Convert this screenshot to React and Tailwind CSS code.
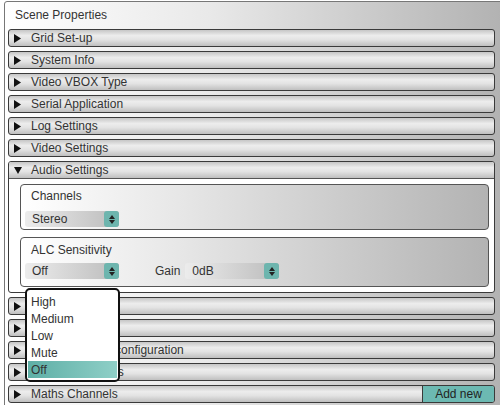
import React from "react";

const rowBg =
  "bg-[linear-gradient(to_bottom,#c6c6c6_0%,#ededed_35%,#e3e3e3_60%,#bfbfbf_100%)]";

function Tri({ down }) {
  return (
    <svg width="8" height="9" viewBox="0 0 8 9" className="shrink-0">
      {down ? (
        <polygon points="0,1 8,1 4,8" fill="#111" />
      ) : (
        <polygon points="0,0 7,4.5 0,9" fill="#111" />
      )}
    </svg>
  );
}

function Row({ label, children }) {
  return (
    <div
      className={`h-[18px] flex items-center border border-[#3a3a3a] rounded-[3px] ${rowBg} pl-[5px] text-[12px] text-[#333] relative overflow-hidden`}
    >
      <Tri />
      <span className="ml-[9px] leading-none">{label}</span>
      {children}
    </div>
  );
}

function Spinner() {
  return (
    <div className="w-[15px] h-[16px] rounded-[3px] bg-[#6db5ae] flex flex-col items-center justify-center gap-[1px]">
      <svg width="6" height="4" viewBox="0 0 6 4">
        <polygon points="0,4 6,4 3,0" fill="#222" />
      </svg>
      <svg width="6" height="4" viewBox="0 0 6 4">
        <polygon points="0,0 6,0 3,4" fill="#222" />
      </svg>
    </div>
  );
}

function Select({ value, width }) {
  return (
    <div
      className="h-[16px] flex items-center justify-between rounded-[3px] bg-[linear-gradient(to_right,#ececec,#bcbcbc)] pl-[7px] text-[12px] text-[#333]"
      style={{ width }}
    >
      <span className="leading-none">{value}</span>
      <Spinner />
    </div>
  );
}

const boxBg = "bg-[linear-gradient(to_right,#ffffff_0%,#e6e6e6_35%,#b3b3b3_100%)]";

export default function App() {
  return (
    <div
      className="w-[500px] h-[405px] overflow-hidden bg-white relative"
      style={{ fontFamily: '"Liberation Sans", Arial, sans-serif' }}
    >
      <div className="ml-[4px] mt-[1px] w-[510px] h-[420px] border border-[#777] rounded-[3px] bg-[linear-gradient(to_right,#ffffff_0%,#e9e9e9_40%,#b0b0b0_100%)]">
        <div className="h-[27px] pt-[7px] pl-[10px] text-[12px] leading-none text-[#333]">
          Scene Properties
        </div>
        <div className="w-[487px] ml-[3px] flex flex-col gap-[4px]">
          <Row label="Grid Set-up" />
          <Row label="System Info" />
          <Row label="Video VBOX Type" />
          <Row label="Serial Application" />
          <Row label="Log Settings" />
          <Row label="Video Settings" />
          <div className="border border-[#3a3a3a] rounded-[3px] overflow-hidden bg-white">
            <div
              className={`h-[17px] flex items-center ${rowBg} pl-[5px] text-[12px] text-[#333] border-b border-[#555]`}
            >
              <Tri down />
              <span className="ml-[9px] leading-none">Audio Settings</span>
            </div>
            <div className="pl-[11px] pr-[5px] pt-[5px] pb-[5px] flex flex-col gap-[7px]">
              <div
                className={`h-[46px] border border-[#555] rounded-[4px] ${boxBg} pl-[4px] pt-[5px] flex flex-col`}
              >
                <div className="text-[12px] text-[#333] leading-none pl-[6px] h-[21px]">
                  Channels
                </div>
                <Select value="Stereo" width={94} />
              </div>
              <div
                className={`h-[50px] border border-[#555] rounded-[4px] ${boxBg} pl-[4px] pt-[6px] flex flex-col`}
              >
                <div className="text-[12px] text-[#333] leading-none pl-[6px] h-[19px]">
                  ALC Sensitivity
                </div>
                <div className="flex items-center">
                  <Select value="Off" width={94} />
                  <span className="ml-[36px] text-[12px] text-[#333] leading-none">
                    Gain
                  </span>
                  <div className="ml-[5px]">
                    <Select value="0dB" width={94} />
                  </div>
                </div>
              </div>
            </div>
          </div>
          <Row label="Lap Timing" />
          <Row label="CAN Settings" />
          <Row label="Analogue Input configuration" />
          <Row label="Vehicle Channels" />
          <Row label="Maths Channels">
            <div className="absolute right-0 top-0 bottom-0 w-[72px] bg-[#6cb9b2] border-l border-[#3a3a3a] flex items-center justify-center text-[12px] text-[#222]">
              Add new
            </div>
          </Row>
        </div>
      </div>

      <div className="absolute left-[25px] top-[288px] w-[95px] h-[94px] bg-white border-2 border-[#111] rounded-[5px] flex flex-col pt-[3px] px-[1px] text-[12px] text-[#333]">
        <div className="h-[17px] flex items-center pl-[3px]">High</div>
        <div className="h-[17px] flex items-center pl-[3px]">Medium</div>
        <div className="h-[17px] flex items-center pl-[3px]">Low</div>
        <div className="h-[17px] flex items-center pl-[3px]">Mute</div>
        <div className="h-[17px] flex items-center pl-[3px] bg-[linear-gradient(to_right,#5eafa6,#8fcfc7)]">
          Off
        </div>
      </div>
    </div>
  );
}
